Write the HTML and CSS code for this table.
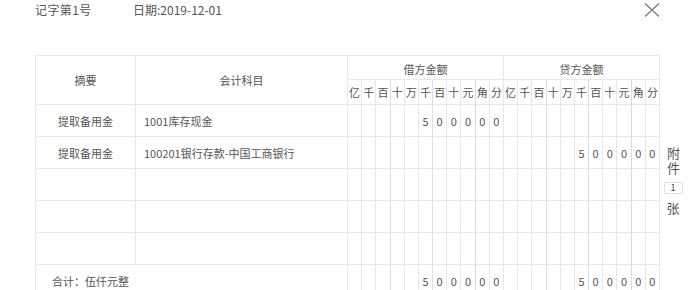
FILE: index.html
```html
<!DOCTYPE html>
<html lang="zh-CN">
<head>
<meta charset="utf-8">
<title>记账凭证</title>
<link rel="stylesheet" href="styles.css">
</head>
<body>
<div class="page">
  <div class="top">
    <span class="no">记字第1号</span>
    <span class="date">日期:2019-12-01</span>
  </div>
  <button class="close" aria-label="关闭">
    <svg width="16" height="16" viewBox="0 0 16 16"><path d="M1 1.5 L15 14.5 M15 1.5 L1 14.5" stroke="#7a7a7a" stroke-width="1.3" fill="none"/></svg>
  </button>
  <div class="main">
    <div class="voucher">
      <div class="h span2r">摘要</div>
      <div class="h span2r">会计科目</div>
      <div class="h grp">借方金额</div>
      <div class="h grp">贷方金额</div>
      <div class="amt lbl">
        <span>亿</span><span>千</span><span>百</span><span>十</span><span>万</span><span>千</span><span>百</span><span>十</span><span>元</span><span>角</span><span>分</span>
        <span>亿</span><span>千</span><span>百</span><span>十</span><span>万</span><span>千</span><span>百</span><span>十</span><span>元</span><span>角</span><span>分</span>
      </div>

      <div class="sum">提取备用金</div>
      <div class="subj">1001库存现金</div>
      <div class="amt">
        <span></span><span></span><span></span><span></span><span></span><span>5</span><span>0</span><span>0</span><span>0</span><span>0</span><span>0</span>
        <span></span><span></span><span></span><span></span><span></span><span></span><span></span><span></span><span></span><span></span><span></span>
      </div>

      <div class="sum">提取备用金</div>
      <div class="subj">100201银行存款-中国工商银行</div>
      <div class="amt">
        <span></span><span></span><span></span><span></span><span></span><span></span><span></span><span></span><span></span><span></span><span></span>
        <span></span><span></span><span></span><span></span><span></span><span>5</span><span>0</span><span>0</span><span>0</span><span>0</span><span>0</span>
      </div>

      <div class="sum"></div>
      <div class="subj"></div>
      <div class="amt">
        <span></span><span></span><span></span><span></span><span></span><span></span><span></span><span></span><span></span><span></span><span></span>
        <span></span><span></span><span></span><span></span><span></span><span></span><span></span><span></span><span></span><span></span><span></span>
      </div>

      <div class="sum"></div>
      <div class="subj"></div>
      <div class="amt">
        <span></span><span></span><span></span><span></span><span></span><span></span><span></span><span></span><span></span><span></span><span></span>
        <span></span><span></span><span></span><span></span><span></span><span></span><span></span><span></span><span></span><span></span><span></span>
      </div>

      <div class="sum"></div>
      <div class="subj"></div>
      <div class="amt">
        <span></span><span></span><span></span><span></span><span></span><span></span><span></span><span></span><span></span><span></span><span></span>
        <span></span><span></span><span></span><span></span><span></span><span></span><span></span><span></span><span></span><span></span><span></span>
      </div>

      <div class="total">合计：伍仟元整</div>
      <div class="amt">
        <span></span><span></span><span></span><span></span><span></span><span>5</span><span>0</span><span>0</span><span>0</span><span>0</span><span>0</span>
        <span></span><span></span><span></span><span></span><span></span><span>5</span><span>0</span><span>0</span><span>0</span><span>0</span><span>0</span>
      </div>
    </div>
    <div class="attach">
      <span class="label">附件</span>
      <span class="count">1</span>
      <span class="zhang">张</span>
    </div>
  </div>
</div>
</body>
</html>
```

FILE: styles.css
```css
html, body {
  margin: 0;
  padding: 0;
  background: #ffffff;
}

body {
  font-family: "Noto Sans CJK SC", "Noto Sans", sans-serif;
  color: #555555;
  overflow: hidden;
}

.page {
  position: relative;
  width: 692px;
  height: 290px;
  padding-left: 35px;
  box-sizing: border-box;
}

.top {
  display: flex;
  height: 20px;
  line-height: 20px;
  font-size: 12px;
  color: #555555;
}

.top .no {
  width: 98px;
  letter-spacing: 0.4px;
}

.close {
  position: absolute;
  top: 2px;
  right: 32px;
  width: 16px;
  height: 16px;
  padding: 0;
  border: 0;
  background: none;
  display: flex;
}

.main {
  display: flex;
  margin-top: 35px;
}

.voucher {
  display: grid;
  grid-template-columns: 100px 212px repeat(22, 1fr);
  grid-template-rows: 24px 25px repeat(6, 32px);
  width: 625px;
  box-sizing: border-box;
  border-top: 1px solid #e8e8e8;
  border-left: 1px solid #e8e8e8;
  font-size: 11px;
  color: #555555;
}

.voucher > div:not(.amt),
.amt > span {
  border-right: 1px solid #e8e8e8;
  border-bottom: 1px solid #e8e8e8;
  box-sizing: border-box;
  display: flex;
  align-items: center;
  min-width: 0;
}

.h {
  justify-content: center;
}

.span2r {
  grid-row: span 2;
}

.grp {
  grid-column: span 11;
  padding-top: 3px;
}

.amt {
  display: contents;
}

.amt > span {
  justify-content: center;
  font-size: 11px;
}

.amt > span:nth-child(3),
.amt > span:nth-child(6),
.amt > span:nth-child(14),
.amt > span:nth-child(17) {
  border-right-color: #c9e4f7;
}

.amt > span:nth-child(9),
.amt > span:nth-child(20) {
  border-right-color: #f3d2d2;
}

.lbl > span {
  font-size: 11px;
  padding-bottom: 1px;
}

.sum {
  justify-content: center;
}

.subj {
  padding-left: 8px;
}

.total {
  grid-column: span 2;
  padding-left: 16px;
}

.attach {
  display: flex;
  flex-direction: column;
  align-items: center;
  width: 26px;
  padding-top: 92px;
  font-size: 13px;
  color: #555555;
}

.attach .label {
  writing-mode: vertical-rl;
  letter-spacing: 2px;
  line-height: 16px;
}

.attach .count {
  margin-top: 5px;
  width: 19px;
  height: 12px;
  box-sizing: border-box;
  border: 1px solid #e3e3e3;
  font-size: 9px;
  line-height: 10px;
  text-align: center;
  color: #444444;
}

.attach .zhang {
  margin-top: 6px;
  line-height: 16px;
}
```
